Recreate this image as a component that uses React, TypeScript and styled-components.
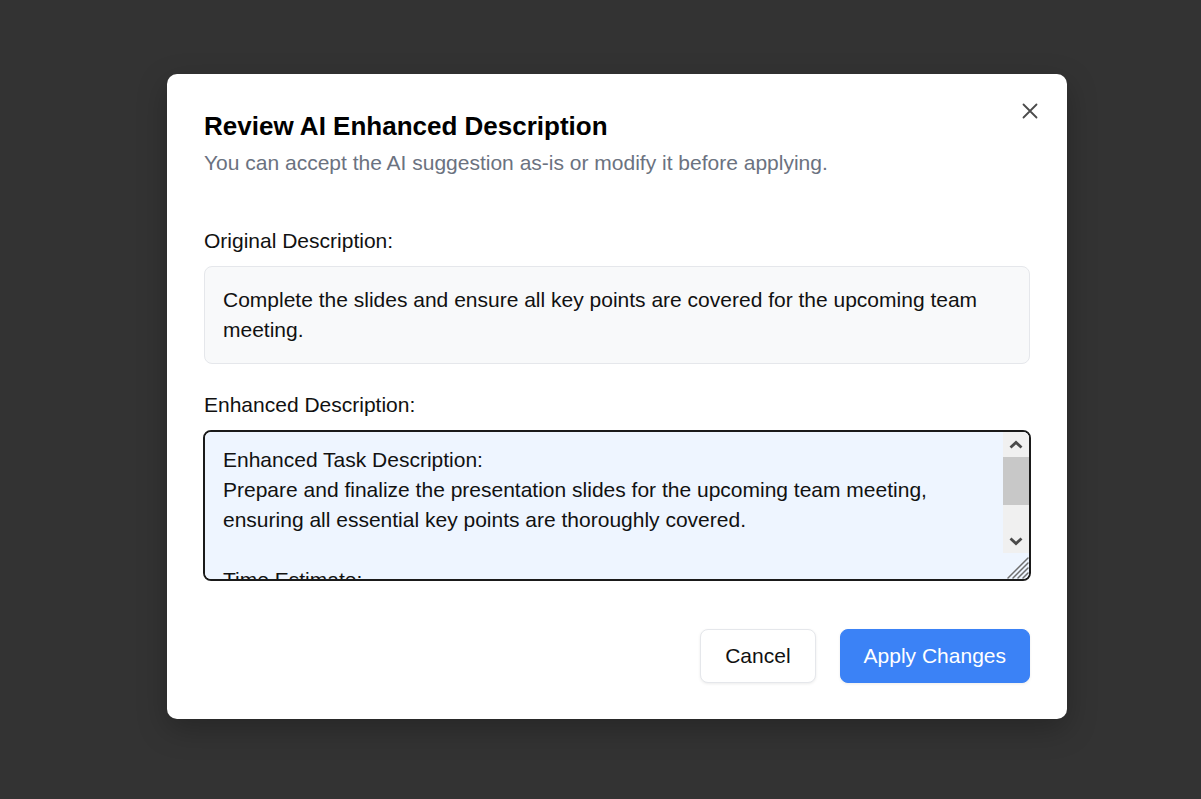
import styled, { createGlobalStyle } from 'styled-components';

const GlobalStyle = createGlobalStyle`
  html, body {
    margin: 0;
    padding: 0;
    background: #333333;
    font-family: "Liberation Sans", Arial, sans-serif;
  }
`;

const Overlay = styled.div`
  width: 1201px;
  height: 799px;
  display: flex;
  align-items: flex-start;
  padding: 74px 0 0 167px;
  box-sizing: border-box;
`;

const Dialog = styled.div`
  position: relative;
  width: 900px;
  box-sizing: border-box;
  padding: 37px 37px 36px;
  background: #ffffff;
  border-radius: 10px;
  box-shadow: 0 10px 30px rgba(0, 0, 0, 0.25);
  display: flex;
  flex-direction: column;
`;

const CloseButton = styled.button`
  position: absolute;
  top: 23px;
  right: 23px;
  width: 28px;
  height: 28px;
  padding: 0;
  border: none;
  background: transparent;
  display: flex;
  align-items: center;
  justify-content: center;
  cursor: pointer;
`;

const Title = styled.h2`
  margin: 0;
  font-size: 26px;
  line-height: 30px;
  font-weight: 700;
  color: #000000;
`;

const Subtitle = styled.p`
  margin: 8px 0 0;
  font-size: 21px;
  line-height: 27px;
  color: #6b7280;
`;

const Label = styled.div<{ $top: number }>`
  margin-top: ${(p) => p.$top}px;
  font-size: 21px;
  line-height: 27px;
  color: #111111;
`;

const OriginalBox = styled.div`
  margin-top: 12px;
  padding: 18px;
  background: #f8f9fa;
  border: 1px solid #e5e7eb;
  border-radius: 8px;
  font-size: 21px;
  line-height: 30px;
  color: #111111;
`;

const EditorWrap = styled.div`
  position: relative;
  margin: 12px -1px 0;
`;

const Editor = styled.textarea`
  width: 100%;
  height: 151px;
  box-sizing: border-box;
  padding: 13px 44px 13px 18px;
  background: #eef5ff;
  border: 2px solid #1a1a1a;
  border-radius: 8px;
  font-family: "Liberation Sans", Arial, sans-serif;
  font-size: 21px;
  line-height: 30px;
  color: #111111;
  resize: none;
  outline: none;
  display: block;
`;

const ScrollTrack = styled.div`
  position: absolute;
  top: 2px;
  right: 2px;
  width: 26px;
  height: 121px;
  background: #f0f0f0;
  border-top-right-radius: 6px;
  display: flex;
  flex-direction: column;
  pointer-events: none;
`;

const ScrollArrow = styled.div`
  height: 25px;
  display: flex;
  align-items: center;
  justify-content: center;
`;

const ScrollThumb = styled.div`
  height: 48px;
  background: #c8c8c8;
`;

const ScrollSpacer = styled.div`
  flex: 1;
`;

const Grip = styled.div`
  position: absolute;
  right: 2px;
  bottom: 2px;
  width: 24px;
  height: 24px;
  pointer-events: none;
`;

const Footer = styled.div`
  margin-top: 48px;
  display: flex;
  justify-content: flex-end;
  gap: 24px;
`;

const Button = styled.button<{ $primary?: boolean }>`
  height: 54px;
  padding: 0 ${(p) => (p.$primary ? 23 : 24)}px;
  border-radius: 8px;
  font-family: "Liberation Sans", Arial, sans-serif;
  font-size: 21px;
  cursor: pointer;
  border: 1px solid ${(p) => (p.$primary ? '#3b82f6' : '#e5e7eb')};
  background: ${(p) => (p.$primary ? '#3b82f6' : '#ffffff')};
  color: ${(p) => (p.$primary ? '#ffffff' : '#111111')};
  box-shadow: 0 1px 3px rgba(0, 0, 0, 0.08);
`;

const enhanced = `Enhanced Task Description:
Prepare and finalize the presentation slides for the upcoming team meeting, ensuring all essential key points are thoroughly covered.

Time Estimate:
Approximately 2 hours

Subtasks:
1. Review the meeting agenda and key objectives.
2. Draft the slide outline.
3. Add supporting visuals and data.
4. Proofread and rehearse the presentation.`;

export default function App() {
  return (
    <>
      <GlobalStyle />
      <Overlay>
        <Dialog>
          <CloseButton aria-label="Close">
            <svg width="16" height="16" viewBox="0 0 16 16">
              <path d="M1.5 1.5 L14.5 14.5 M14.5 1.5 L1.5 14.5" stroke="#4b4b4b" strokeWidth="1.8" strokeLinecap="round" />
            </svg>
          </CloseButton>
          <Title>Review AI Enhanced Description</Title>
          <Subtitle>You can accept the AI suggestion as-is or modify it before applying.</Subtitle>
          <Label $top={51}>Original Description:</Label>
          <OriginalBox>
            Complete the slides and ensure all key points are covered for the upcoming team meeting.
          </OriginalBox>
          <Label $top={27}>Enhanced Description:</Label>
          <EditorWrap>
            <Editor defaultValue={enhanced} />
            <ScrollTrack>
              <ScrollArrow>
                <svg width="14" height="10" viewBox="0 0 14 10">
                  <path d="M1.5 7.5 L7 2.5 L12.5 7.5" fill="none" stroke="#4a4a4a" strokeWidth="2.8" />
                </svg>
              </ScrollArrow>
              <ScrollThumb />
              <ScrollSpacer />
              <ScrollArrow>
                <svg width="14" height="10" viewBox="0 0 14 10">
                  <path d="M1.5 2.5 L7 7.5 L12.5 2.5" fill="none" stroke="#4a4a4a" strokeWidth="2.8" />
                </svg>
              </ScrollArrow>
            </ScrollTrack>
            <Grip>
              <svg width="24" height="24" viewBox="0 0 24 24">
                <path d="M23 3 L3 23 M23 8 L8 23 M23 13 L13 23 M23 18 L18 23" stroke="#6e6e6e" strokeWidth="1.5" strokeLinecap="round" />
              </svg>
            </Grip>
          </EditorWrap>
          <Footer>
            <Button>Cancel</Button>
            <Button $primary>Apply Changes</Button>
          </Footer>
        </Dialog>
      </Overlay>
    </>
  );
}
